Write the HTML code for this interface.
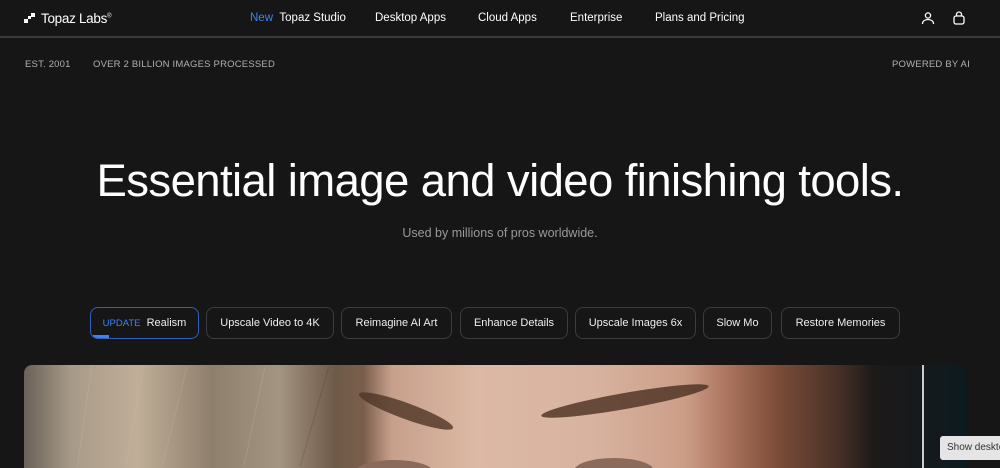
<!DOCTYPE html>
<html><head><meta charset="utf-8"><style>
*{margin:0;padding:0;box-sizing:border-box}
body{width:1000px;height:468px;background:#161616;color:#fff;font-family:"Liberation Sans",sans-serif;overflow:hidden;position:relative}
.hdr{position:absolute;top:0;left:0;width:1000px;height:38px;border-bottom:2px solid #3a3a3a}
.logo{position:absolute;left:25px;top:11px;font-size:13.5px;letter-spacing:-0.3px;font-weight:500}
.nav{position:absolute;top:12px;font-size:11.5px}
.small{position:absolute;top:59px;font-size:9.5px;color:#b0b0b0;letter-spacing:0.2px}
h1{position:absolute;top:155px;left:0;width:1000px;text-align:center;font-size:45.5px;font-weight:normal;letter-spacing:-0.6px}
.sub{position:absolute;top:226px;width:1000px;text-align:center;font-size:12.5px;color:#9a9a9a}
.btn{position:absolute;top:307px;height:32px;border:1px solid #3c3c3c;border-radius:8px;font-size:11px;line-height:30px;text-align:center;color:#eee}
.img{position:absolute;left:24px;top:365px;width:943px;height:103px;border-radius:8px 8px 0 0;overflow:hidden;
background:linear-gradient(90deg,#6a6158 0%,#a89a88 5%,#c0ae98 12%,#8e7e6c 20%,#a49482 27%,#6e5a48 33%,#7a5e4c 36%,#c7a08c 39%,#dcb9a4 48%,#d8b4a0 60%,#cc9e88 70%,#a8705a 75%,#7a4c38 80%,#4a3228 86%,#1e1a18 90%,#141a1e 95.5%,#0c1a20 100%)}
.strand{position:absolute;top:0;height:103px;width:1px;background:#d8c8b2;opacity:.2}
</style></head><body>
<div class="hdr">
<svg style="position:absolute;left:24px;top:13px" width="12" height="10"><rect x="0" y="6" width="4" height="4" fill="#fff"/><rect x="4" y="3" width="3" height="3" fill="#fff"/><rect x="7" y="0" width="4" height="4" fill="#fff"/></svg>
<div class="logo" style="left:41px">Topaz Labs<sup style="font-size:6px">®</sup></div>
<div class="nav" style="left:250px"><span style="color:#3b82f6">New</span> &nbsp;Topaz Studio</div>
<div class="nav" style="left:375px">Desktop Apps</div>
<div class="nav" style="left:478px">Cloud Apps</div>
<div class="nav" style="left:570px">Enterprise</div>
<div class="nav" style="left:655px">Plans and Pricing</div>
<svg style="position:absolute;left:921px;top:11px" width="14" height="14" fill="none" stroke="#fff" stroke-width="1.3"><circle cx="7" cy="4.5" r="2.6"/><path d="M1.5 13c0-3 2.5-4.5 5.5-4.5s5.5 1.5 5.5 4.5"/></svg>
<svg style="position:absolute;left:952px;top:11px" width="14" height="14" fill="none" stroke="#fff" stroke-width="1.3"><path d="M4.5 5V3.5a2.5 2.5 0 015 0V5"/><rect x="2" y="5" width="10" height="8" rx="2"/></svg>
</div>
<div class="small" style="left:25px">EST. 2001</div>
<div class="small" style="left:93px">OVER 2 BILLION IMAGES PROCESSED</div>
<div class="small" style="left:892px">POWERED BY AI</div>
<h1>Essential image and video finishing tools.</h1>
<div class="sub">Used by millions of pros worldwide.</div>
<div class="btn" style="left:90px;width:109px;border-color:#2f5fb8;overflow:hidden"><span style="color:#3b82f6;font-size:9.5px">UPDATE</span> &nbsp;Realism<div style="position:absolute;left:2px;bottom:0;width:16px;height:3px;background:#3b82f6"></div></div>
<div class="btn" style="left:206px;width:128px">Upscale Video to 4K</div>
<div class="btn" style="left:341px;width:111px">Reimagine AI Art</div>
<div class="btn" style="left:460px;width:108px">Enhance Details</div>
<div class="btn" style="left:575px;width:121px">Upscale Images 6x</div>
<div class="btn" style="left:703px;width:69px">Slow Mo</div>
<div class="btn" style="left:781px;width:119px">Restore Memories</div>
<div class="img">
<div class="strand" style="left:60px;transform:rotate(8deg)"></div>
<div class="strand" style="left:110px;transform:rotate(10deg)"></div>
<div class="strand" style="left:150px;transform:rotate(14deg)"></div>
<div class="strand" style="left:230px;transform:rotate(12deg)"></div>
<div class="strand" style="left:290px;transform:rotate(16deg);background:#3a2a20"></div>
<div style="position:absolute;left:332px;top:38px;width:100px;height:16px;border-radius:50%;background:#4e3426;transform:rotate(20deg);opacity:.8"></div>
<div style="position:absolute;left:516px;top:28px;width:170px;height:16px;border-radius:50%;background:#4a3020;transform:rotate(-10deg);opacity:.8"></div>
<div style="position:absolute;left:330px;top:95px;width:80px;height:26px;border-radius:50%;background:#8a6a5a"></div>
<div style="position:absolute;left:550px;top:93px;width:80px;height:26px;border-radius:50%;background:#8a6a5a"></div>
<div style="position:absolute;left:898px;top:0;width:2px;height:103px;background:#ccc"></div>
</div>
<div style="position:absolute;left:940px;top:436px;width:70px;height:24px;background:#e5e5e5;border-radius:3px;color:#333;font-size:10px;line-height:24px;padding-left:7px;white-space:nowrap">Show desktop</div>
</body></html>
